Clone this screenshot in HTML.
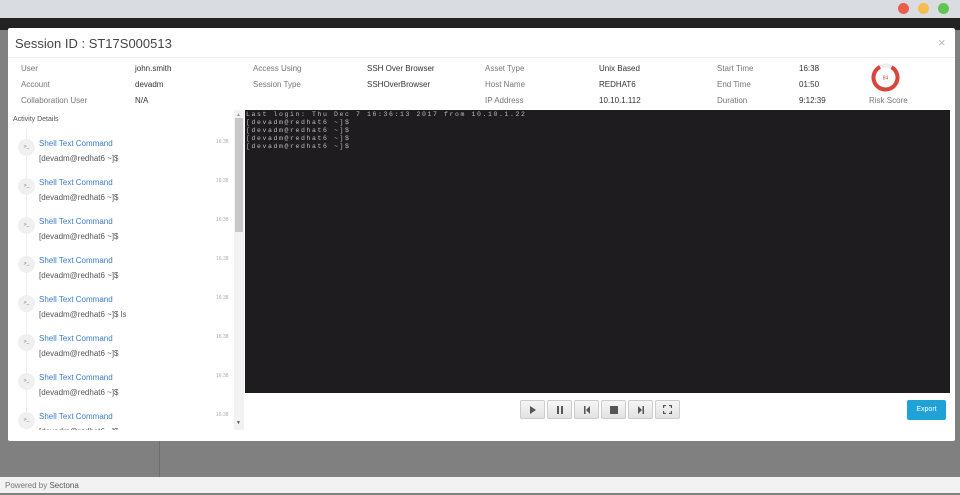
<!DOCTYPE html><html><head><style>
body{margin:0;width:960px;height:493px;position:relative;overflow:hidden;font-family:"Liberation Sans",sans-serif;background:#808080}
.a{position:absolute}
.lbl{font-size:8px;color:#777}
.val{font-size:8px;color:#333}
.it .t{font-size:8px;color:#3a7bc8}
.it .c{font-size:8px;color:#555}
.tm{font-size:5px;color:#aaa}
.btn{position:absolute;top:400px;width:25px;height:19px;background:linear-gradient(#f6f6f6,#e2e2e2);border:1px solid #ccc;box-sizing:border-box;border-radius:2px;display:flex;align-items:center;justify-content:center}
.term{font-family:"Liberation Mono",monospace;font-size:6.5px;color:#bbb;letter-spacing:1.6px;line-height:8px}
</style></head><body>
<div class="a" style="left:0;top:0;width:960px;height:18px;background:#d9dce1"></div>
<div class="a" style="left:898px;top:3px;width:11px;height:11px;border-radius:50%;background:#e8604c"></div>
<div class="a" style="left:918px;top:3px;width:11px;height:11px;border-radius:50%;background:#f5bd4f"></div>
<div class="a" style="left:938px;top:3px;width:11px;height:11px;border-radius:50%;background:#61c454"></div>
<div class="a" style="left:0;top:18px;width:960px;height:12px;background:#222"></div>
<div class="a" style="left:159px;top:441px;width:1px;height:36px;background:#6e6e6e"></div>
<div class="a" style="left:0;top:477px;width:960px;height:16px;background:#f2f2f2;font-size:8px;color:#777;line-height:18px;padding-left:5px">Powered by <span style="color:#555">Sectona</span></div>
<div class="a" style="left:8px;top:28px;width:947px;height:413px;background:#fff;border-radius:2px">
<div class="a" style="left:7px;top:8px;font-size:13px;color:#444">Session ID : ST17S000513</div>
<div class="a" style="left:930px;top:7px;font-size:13px;color:#bbb">×</div>
<div class="a" style="left:0;top:29px;width:947px;height:1px;background:#eee"></div>
</div>
<div class="a lbl" style="left:21px;top:64px">User</div><div class="a val" style="left:135px;top:64px">john.smith</div>
<div class="a lbl" style="left:21px;top:80px">Account</div><div class="a val" style="left:135px;top:80px">devadm</div>
<div class="a lbl" style="left:21px;top:96px">Collaboration User</div><div class="a val" style="left:135px;top:96px">N/A</div>
<div class="a lbl" style="left:253px;top:64px">Access Using</div><div class="a val" style="left:367px;top:64px">SSH Over Browser</div>
<div class="a lbl" style="left:253px;top:80px">Session Type</div><div class="a val" style="left:367px;top:80px">SSHOverBrowser</div>
<div class="a lbl" style="left:485px;top:64px">Asset Type</div><div class="a val" style="left:599px;top:64px">Unix Based</div>
<div class="a lbl" style="left:485px;top:80px">Host Name</div><div class="a val" style="left:599px;top:80px">REDHAT6</div>
<div class="a lbl" style="left:485px;top:96px">IP Address</div><div class="a val" style="left:599px;top:96px">10.10.1.112</div>
<div class="a lbl" style="left:717px;top:64px">Start Time</div><div class="a val" style="left:799px;top:64px">16:38</div>
<div class="a lbl" style="left:717px;top:80px">End Time</div><div class="a val" style="left:799px;top:80px">01:50</div>
<div class="a lbl" style="left:717px;top:96px">Duration</div><div class="a val" style="left:799px;top:96px">9:12:39</div>
<svg class="a" style="left:870px;top:62px" width="31" height="31"><circle cx="15.5" cy="15.5" r="12" fill="none" stroke="#eee" stroke-width="4"/><circle cx="15.5" cy="15.5" r="12" fill="none" stroke="#d9443c" stroke-width="4" stroke-dasharray="63 76" transform="rotate(-60 15.5 15.5)"/><text x="15.5" y="17.5" font-size="5" fill="#d9443c" text-anchor="middle" font-family="Liberation Sans">84</text></svg>
<div class="a lbl" style="left:869px;top:96px">Risk Score</div>
<div class="a" style="left:13px;top:116px;font-size:7px;color:#555">Activity Details</div>
<div class="a" style="left:10px;top:130px;width:224px;height:300px;overflow:hidden">
<div class="a" style="left:16px;top:0;width:1px;height:300px;background:#eee"></div>
<div id="L"></div></div>
<script>
var cmds=["[devadm@redhat6 ~]$","[devadm@redhat6 ~]$","[devadm@redhat6 ~]$","[devadm@redhat6 ~]$","[devadm@redhat6 ~]$ ls","[devadm@redhat6 ~]$","[devadm@redhat6 ~]$","[devadm@redhat6 ~]$"],h="";
cmds.forEach(function(c,i){var y=i*39;h+='<div class="a it" style="left:0;top:'+y+'px;width:224px;height:39px"><div class="a" style="left:8px;top:9px;width:17px;height:17px;border-radius:50%;background:#f0f0f0;font-size:5px;color:#777;text-align:center;line-height:17px">&gt;_</div><div class="a t" style="left:29px;top:9px">Shell Text Command</div><div class="a c" style="left:29px;top:24px">'+c+'</div><div class="a tm" style="left:206px;top:9px">16:38</div></div>';});
document.getElementById("L").innerHTML=h;
</script>
<div class="a" style="left:234px;top:110px;width:10px;height:320px;background:#f2f2f2"></div>
<div class="a" style="left:235px;top:118px;width:8px;height:114px;background:#c8c8c8"></div>
<div class="a" style="left:236px;top:420px;font-size:5px;color:#555">▼</div>
<div class="a" style="left:236px;top:112px;font-size:5px;color:#999">▲</div>
<div class="a" style="left:245px;top:110px;width:705px;height:283px;background:#1f1c20"></div>
<div class="a term" style="left:246px;top:111px">Last login: Thu Dec  7 16:36:13 2017 from 10.10.1.22<br>[devadm@redhat6 ~]$<br>[devadm@redhat6 ~]$<br>[devadm@redhat6 ~]$<br>[devadm@redhat6 ~]$</div>
<div class="btn" style="left:520px"><svg width="8" height="8"><path d="M1 0L7 4L1 8Z" fill="#555"/></svg></div>
<div class="btn" style="left:547px"><svg width="8" height="8"><rect x="1" y="0" width="2" height="8" fill="#555"/><rect x="5" y="0" width="2" height="8" fill="#555"/></svg></div>
<div class="btn" style="left:574px"><svg width="8" height="8"><rect x="1" y="0" width="1.5" height="8" fill="#555"/><path d="M7 0L3 4L7 8Z" fill="#555"/></svg></div>
<div class="btn" style="left:601px"><svg width="8" height="8"><rect x="0" y="0" width="8" height="8" fill="#555"/></svg></div>
<div class="btn" style="left:628px"><svg width="8" height="8"><path d="M1 0L5 4L1 8Z" fill="#555"/><rect x="5.5" y="0" width="1.5" height="8" fill="#555"/></svg></div>
<div class="btn" style="left:655px"><svg width="9" height="9" fill="none" stroke="#555" stroke-width="1.3"><path d="M0.5 3V0.5H3M6 0.5H8.5V3M8.5 6V8.5H6M3 8.5H0.5V6"/></svg></div>
<div class="a" style="left:907px;top:400px;width:39px;height:20px;background:#1fa3d6;border-radius:2px;color:#fff;font-size:7px;text-align:center;line-height:20px">Export</div>
</body></html>
